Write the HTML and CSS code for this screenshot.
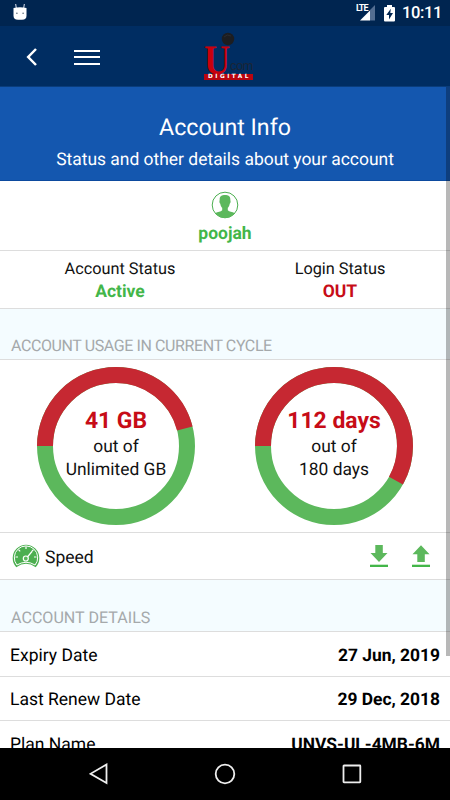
FILE: index.html
```html
<!DOCTYPE html>
<html lang="en">
<head>
<meta charset="utf-8">
<title>Account Info</title>
<link rel="stylesheet" href="styles.css">
</head>
<body>
<div class="screen">
  <div class="statusbar">
    <svg class="droid" width="14" height="17" viewBox="0 0 14 17"><path d="M2.600 0 L3.500 5 M11.400 0 L10.500 5" stroke="#b9c5d8" stroke-width="1.200"/><path d="M.5 4 Q7 2.500 13.500 4 V11.500 Q13.500 15.800 9 15.800 H5 Q.5 15.800 .5 11.500Z" fill="#fff"/><circle cx="3.900" cy="9.300" r=".7" fill="#456"/><circle cx="10.100" cy="9.300" r=".7" fill="#456"/></svg>
    <div class="indicators">
      <div class="signal">
        <svg width="19" height="17" viewBox="0 0 19 17"><path d="M19 1 V16.500 H14 V6Z" fill="#536e92"/><path d="M14 6.500 V16.500 H4Z" fill="#fff"/></svg>
        <span class="lte">LTE</span>
      </div>
      <svg class="battery" width="11" height="17" viewBox="0 0 11 17"><path d="M3 0H8V2H10Q11 2 11 3V15.500Q11 16.500 10 16.500H1Q0 16.500 0 15.500V3Q0 2 1 2H3Z" fill="#fff"/><path d="M6.800 3.800 L2.300 10 H5 V14.500 L9 8 H6.300Z" fill="#002550"/></svg>
      <span class="clock">10:11</span>
    </div>
  </div>
  <header class="toolbar">
    <svg class="back" width="12" height="18" viewBox="0 0 12 18"><path d="M10 1 L2.200 9 L10 17" fill="none" stroke="#fff" stroke-width="2.500"/></svg>
    <div class="menu"><i></i><i></i><i></i></div>
    <div class="logo">
      <svg class="ball" width="14" height="14" viewBox="0 0 14 14"><circle cx="7" cy="7" r="6.200" fill="#1c1d20"/><path d="M3 5 Q6 1.500 10 4" stroke="#292b30" fill="none"/></svg>
      <span class="logo-u">U</span><span class="logo-com">com</span>
      <span class="logo-digital">DIGITAL</span>
    </div>
  </header>
  <main class="content">
    <section class="hero">
      <h1>Account Info</h1>
      <p>Status and other details about your account</p>
    </section>
    <section class="user">
      <svg width="28" height="28" viewBox="0 0 28 28"><circle cx="14" cy="14" r="12.800" fill="#fff" stroke="#4caf50" stroke-width="1"/><path d="M14 4 C17.500 4 19.700 5.500 19.300 9 C19.800 10 19.700 12 18.700 12.700 C18.400 14.800 17.600 16 16.800 16.800 V19.300 C18.200 20.800 21 20.800 24 22.300 A13 13 0 0 1 4 22.300 C7 20.800 9.800 20.800 11.200 19.300 V16.800 C10.400 16 9.600 14.800 9.300 12.700 C8.300 12 8.200 10 8.700 9 C8.300 5.500 10.500 4 14 4Z" fill="#5cb85c"/></svg>
      <strong>poojah</strong>
    </section>
    <section class="states">
      <div><span class="st-label">Account Status</span><strong class="green">Active</strong></div>
      <div><span class="st-label">Login Status</span><strong class="red">OUT</strong></div>
    </section>
    <h2 class="heading usage-heading">ACCOUNT USAGE IN CURRENT CYCLE</h2>
    <section class="charts">
      <div class="ring">
        <svg viewBox="0 0 158 158"><circle cx="79" cy="79" r="71" class="rest"/><circle cx="79" cy="79" r="71" class="used" pathLength="360" stroke-dasharray="165.600 360"/></svg>
        <div class="ring-text"><strong>41 GB</strong><span>out of</span><span class="total">Unlimited GB</span></div>
      </div>
      <div class="ring">
        <svg viewBox="0 0 158 158"><circle cx="79" cy="79" r="71" class="rest"/><circle cx="79" cy="79" r="71" class="used" pathLength="360" stroke-dasharray="209.300 360"/></svg>
        <div class="ring-text"><strong>112 days</strong><span>out of</span><span class="total">180 days</span></div>
      </div>
    </section>
    <section class="speed">
      <svg class="gauge" width="28" height="26" viewBox="0 0 28 26"><path d="M4.300 24.200 A13.300 13.300 0 1 1 23.700 24.200 Q14 17.500 4.300 24.200Z" fill="#4caf50"/><path d="M4.900 22 A11.700 11.700 0 1 1 23.100 22 Q14 16.500 4.900 22Z" fill="none" stroke="#fff" stroke-width="1"/><path d="M14 3.500V6 M6.500 6.600L8.200 8.300 M21.500 6.600L19.800 8.300 M3.500 14H6 M22 14H24.500 M15 14.500L20 8.500" stroke="#fff" stroke-width="1.200"/><circle cx="13.800" cy="15.500" r="2.500" fill="#5cb85c" stroke="#fff" stroke-width="1.200"/></svg>
      <span class="speed-label">Speed</span>
      <svg class="down" width="18" height="23" viewBox="0 0 18 23"><path d="M5.300 0H12.800V8H17.500L9 17L.5 8H5.300Z" fill="#5cb85c"/><path d="M0 19.700H18V22H0Z" fill="#43b649"/></svg>
      <svg class="up" width="18" height="23" viewBox="0 0 18 23"><path d="M5.300 17H12.800V9.300H17.500L9 .3L.5 9.300H5.300Z" fill="#5cb85c"/><path d="M0 19.700H18V22H0Z" fill="#43b649"/></svg>
    </section>
    <h2 class="heading details-heading">ACCOUNT DETAILS</h2>
    <dl class="details">
      <div><dt>Expiry Date</dt><dd>27 Jun, 2019</dd></div>
      <div><dt>Last Renew Date</dt><dd>29 Dec, 2018</dd></div>
      <div><dt>Plan Name</dt><dd class="plan">UNVS-UL-4MB-6M</dd></div>
    </dl>
    <div class="scrollbar"></div>
  </main>
  <nav class="navbar">
    <svg width="20" height="22" viewBox="0 0 20 22"><path d="M17.500 1.500V20L1.500 10.800Z"/></svg>
    <svg width="22" height="22" viewBox="0 0 22 22"><circle cx="11" cy="11" r="9.300"/></svg>
    <svg width="20" height="20" viewBox="0 0 20 20"><rect x="1.500" y="1.500" width="16.800" height="16.800" rx=".5"/></svg>
  </nav>
</div>
</body>
</html>
```
FILE: styles.css
```css
* { box-sizing: border-box; margin: 0; padding: 0; }
body { font-family: Roboto, "Liberation Sans", sans-serif; background: #fff; color: #111; text-rendering: geometricPrecision; }
svg { display: block; flex: none; }
.screen { width: 450px; height: 800px; display: flex; flex-direction: column; overflow: hidden; }

.statusbar { height: 26px; flex: none; background: #002550; display: flex; justify-content: space-between; padding: 4px 9px 0 13px; color: #fff; }
.indicators { display: flex; }
.signal { position: relative; margin-right: 9px; }
.lte { position: absolute; left: 0; top: 1px; font: 700 9px/8px Roboto, sans-serif; letter-spacing: -1px; transform: scaleY(1.1); }
.battery { margin: 1px 7px 0 0; }
.clock { font-size: 16.500px; line-height: 20px; font-weight: 500; letter-spacing: -.4px; width: 39px; white-space: nowrap; position: relative; top: 0; }

.toolbar { height: 61px; flex: none; background: #002d62; border-bottom: 1px solid #0a3d7c; display: flex; position: relative; padding-left: 26px; }
.back { margin-top: 22px; }
.menu { width: 26px; margin: 24px 0 0 36px; display: flex; flex-direction: column; gap: 4px; }
.menu i { height: 2px; background: #fff; }
.menu i + i { margin-top: .3px; }
.logo { position: absolute; left: 203px; top: 6px; width: 51px; height: 48px; }
.ball { position: absolute; left: 18px; top: 0; }
.logo-u { position: absolute; left: 1px; top: 11px; font: 700 42px/36px "Liberation Serif", serif; color: #c8000c; transform: scaleX(.86); transform-origin: left; }
.logo-com { position: absolute; left: 27px; top: 27px; font: 13px/14px "Liberation Sans", sans-serif; color: #1b2536; letter-spacing: -.6px; }
.logo-digital { position: absolute; left: 1px; top: 42px; width: 49px; height: 6px; background: #b80510; color: #fff; font: 700 5.8px/6px "DejaVu Sans", sans-serif; text-align: center; letter-spacing: 2.500px; text-indent: 2px; white-space: nowrap; }

.content { flex: 1; min-height: 0; overflow: hidden; position: relative; }
.hero { height: 94px; background: #1457af; color: #fff; text-align: center; padding-top: 26px; border-bottom: 1px solid #0c4a9e; }
.hero h1 { font-size: 23.200px; line-height: 28px; font-weight: 400; }
.hero p { font-size: 17.450px; line-height: 20px; margin-top: 9px; }
.user { height: 70px; display: flex; flex-direction: column; align-items: center; padding-top: 10px; border-bottom: 1px solid #ddd; }
.user strong { font-size: 17.500px; line-height: 20px; margin-top: 5px; font-weight: 700; color: #43b649; }
.states { height: 58px; display: grid; grid-template-columns: 1fr 1fr; padding: 8px 0 0 10px; border-bottom: 1px solid #ddd; text-align: center; }
.states div { display: flex; flex-direction: column; }
.st-label { font-size: 16.300px; line-height: 19px; }
.states strong { font-size: 17.500px; line-height: 20px; margin-top: 4px; }
.green { color: #43b649; }
.red { color: #c70c17; }
.heading { height: 51px; background: #f4fcff; border-bottom: 1px solid #ddd; padding: 28px 11px 0; font-size: 16.100px; line-height: 19px; font-weight: 400; color: #a5a9ab; white-space: nowrap; }
.usage-heading { padding-top: 27px; font-size: 16px; letter-spacing: -.4px; }
.charts { height: 173px; display: flex; justify-content: space-between; padding: 7px 37px 0; border-bottom: 1px solid #ddd; }
.ring { width: 158px; height: 158px; position: relative; }
.ring svg { width: 158px; height: 158px; }
.ring circle { fill: none; stroke-width: 16px; }
.rest { stroke: #5cb85c; }
.used { stroke: #c62832; transform: rotate(180deg); transform-origin: 79px 79px; }
.ring-text { position: absolute; inset: 41px 0 0; display: flex; flex-direction: column; text-align: center; font-size: 17.400px; line-height: 23px; }
.ring-text strong { font-size: 22.900px; line-height: 26px; margin-bottom: 1.500px; color: #c70c17; }
.speed { height: 47px; display: flex; padding: 0 20px 0 12px; border-bottom: 1px solid #ddd; }
.gauge { margin-top: 10px; }
.speed-label { font-size: 17.500px; line-height: 20px; margin: 15px auto 0 5px; }
.down, .up { margin-top: 12px; }
.up { margin-left: 24px; }
.details-heading { height: 52px; }
.details div { height: 44.500px; display: flex; justify-content: space-between; padding: 13.500px 10px 0; border-bottom: 1px solid #ddd; font-size: 17.500px; line-height: 20px; color: #000; }
.details dd { font-weight: 700; font-size: 17.400px; }
.scrollbar { position: absolute; right: 0; top: 0; width: 4px; height: 569px; background: rgba(0,0,0,.28); }

.navbar { height: 52px; flex: none; background: #000; display: grid; grid-template-columns: repeat(3, 126.500px); justify-content: center; justify-items: center; align-items: center; }
.navbar svg { fill: none; stroke: #eee; stroke-width: 1.800px; }
```
